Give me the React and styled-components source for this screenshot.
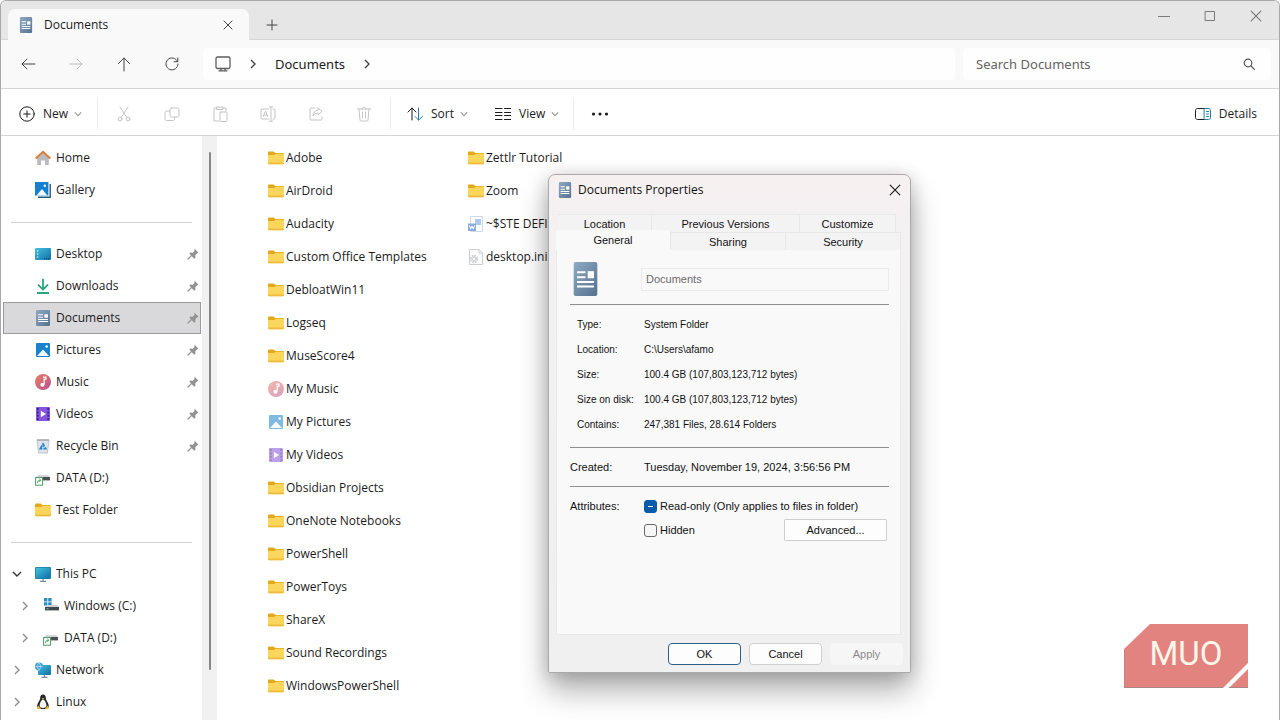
import { useEffect, useRef } from "react";
import styled, { createGlobalStyle, css } from "styled-components";

const GlobalStyle = createGlobalStyle`
  * {
    box-sizing: border-box;
  }

  body {
    margin: 0;
    background: #fff;
    color: #1b1b1b;
    font-family: "Open Sans", "Noto Sans", sans-serif;
    font-size: 12px;
    line-height: 16px;
  }

  button,
  input {
    font: inherit;
    color: inherit;
    padding: 0;
    margin: 0;
    border: none;
    background: none;
    outline: none;
  }

  a {
    color: inherit;
    text-decoration: none;
  }

  svg {
    display: block;
    flex: none;
  }
`;

const Window = styled.div`
  position: relative;
  display: flex;
  flex-direction: column;
  min-height: 100vh;
  overflow: hidden;
  border: 1px solid #a8a8a8;
  border-bottom: none;
  border-radius: 6px 6px 0 0;
  background: #fff;
`;

const TitleBar = styled.header`
  display: flex;
  height: 39px;
  padding-left: 7px;
  background: #e6e6e6;
  box-shadow: inset 0 -1px #d6d6d6;
`;

const Tab = styled.div`
  display: flex;
  align-items: center;
  width: 241px;
  margin-top: 8px;
  padding: 0 13px 0 11px;
  gap: 11px;
  border-radius: 7px 7px 0 0;
  background: #f9f9fa;
  font-weight: 500;

  span {
    flex: 1;
  }
`;

const GlyphButton = styled.button`
  display: flex;
  align-items: center;
  justify-content: center;
  width: ${(props) => props.$width || 48}px;
  height: ${(props) => props.$height || 32}px;
  color: ${(props) => props.$color || "#444"};
`;

const NewTab = styled(GlyphButton)`
  margin: 8px auto 0 0;
`;

const AddressBar = styled.div`
  display: flex;
  align-items: center;
  height: 49px;
  padding: 0 8px 0 3px;
  border-bottom: 1px solid #d4d4d4;
  background: #f9f9f9;
`;

const Breadcrumb = styled.nav`
  display: flex;
  align-items: center;
  flex: 1;
  height: 32px;
  margin-left: 7px;
  padding-left: 12px;
  border-radius: 4px;
  background: #fefefe;
  font-family: "Noto Sans", sans-serif;
  font-size: 13px;

  a {
    margin: 0 17px;
  }

  svg:first-child {
    margin-right: 17px;
    color: #5c5c5c;
  }
`;

const SearchBox = styled.label`
  display: flex;
  align-items: center;
  width: 308px;
  height: 32px;
  margin-left: 8px;
  padding: 0 16px 0 13px;
  border-radius: 4px;
  background: #fefefe;
  color: #555;
  font-family: "Noto Sans", sans-serif;
  font-size: 13px;

  input {
    flex: 1;
    min-width: 0;
  }

  input::placeholder {
    color: #636363;
    opacity: 1;
  }
`;

const Toolbar = styled.div`
  display: flex;
  align-items: center;
  height: 47px;
  padding: 3px 22px 0 18px;
  border-bottom: 1px solid #d4d4d4;
  background: #fff;
`;

const ToolButton = styled.button`
  display: flex;
  align-items: center;
  gap: 8px;
  width: ${(props) => (props.$width ? `${props.$width}px` : "auto")};
  height: 32px;
  margin-left: ${(props) => (props.$push ? "auto" : "0")};

  svg:last-child:not(:first-child) {
    margin-left: -2px;
  }
`;

const ToolDivider = styled.span`
  width: 1px;
  height: 32px;
  margin: 0 ${(props) => props.$after || 2}px 0 ${(props) => props.$before || 2}px;
  background: #ececec;
`;

const Body = styled.div`
  display: flex;
  flex: 1;
`;

const Sidebar = styled.nav`
  width: 200px;
  padding: 6px 0 2px 2px;
`;

const NavRow = styled.a`
  display: flex;
  align-items: center;
  height: 32px;
  gap: 5px;
  padding: 0 1px 0 ${(props) => (props.$nested ? 15 : 7)}px;
  border: 1px solid transparent;

  > span {
    flex: 1;
  }

  ${(props) =>
    props.$selected &&
    css`
      border-color: #9b9b9b;
      background: #d9d9db;
    `}
`;

const Expander = styled.i`
  display: flex;
  justify-content: center;
  width: 12px;
  margin-right: 7px;
`;

const NavDivider = styled.hr`
  height: 32px;
  margin: 0 9px 0 8px;
  border: none;
  background: linear-gradient(#d0d0d0, #d0d0d0) center / 100% 1px no-repeat;
`;

const ScrollTrack = styled.div`
  display: flex;
  justify-content: center;
  width: 15px;
  margin-left: 1px;
  padding: 16px 0 50px;
  background: #f1f1f2;
`;

const ScrollThumb = styled.div`
  width: 2px;
  border-radius: 1px;
  background: #88888a;
`;

const FileList = styled.main`
  display: grid;
  grid-auto-flow: column;
  grid-template-rows: repeat(17, 33px);
  grid-auto-columns: 200px;
  flex: 1;
  min-width: 0;
  padding: 5px 0 0 51px;
`;

const FileItem = styled.a`
  display: flex;
  align-items: center;
  gap: 2px;
  white-space: nowrap;

  svg {
    opacity: ${(props) => (props.$faded ? 0.55 : 1)};
  }
`;

const Dialog = styled.section`
  position: absolute;
  top: 173px;
  left: 547px;
  display: flex;
  flex-direction: column;
  width: 363px;
  height: 499px;
  border: 1px solid #a9a9a9;
  border-radius: 7px 7px 1px 1px;
  background: linear-gradient(#f7f0f1, #f3f1f2 60px, #f0f0f0);
  box-shadow:
    0 18px 30px rgba(0, 0, 0, 0.3),
    0 2px 18px rgba(0, 0, 0, 0.18);
  color: #111;
  font-family: "Liberation Sans", Arial, sans-serif;
  font-size: 11px;
  line-height: 14px;
`;

const DialogTitle = styled.header`
  display: flex;
  align-items: center;
  gap: 6px;
  height: 30px;
  padding: 0 9px;
  font-family: "Open Sans", "Noto Sans", sans-serif;
  font-size: 12px;

  h2 {
    flex: 1;
    margin: 0;
    font-size: inherit;
    font-weight: 400;
  }
`;

const TabRow = styled.div`
  display: grid;
  grid-template-columns: ${(props) => props.$columns};
  margin: ${(props) => props.$margin};
`;

const DialogTab = styled.button`
  height: 18px;
  border: solid #e8e8e8;
  border-width: 1px 1px 0 0;
  background: #f4f3f4;

  ${(props) =>
    props.$selected &&
    css`
      height: 20px;
      margin-top: -2px;
      padding-bottom: 2px;
      border-top-color: #f9f9fa;
      background: #f9f9fa;
    `}
`;

const Panel = styled.div`
  flex: 1;
  margin: 0 9px 0 7px;
  padding: 12px 11px 0 13px;
  border: 1px solid #e9e9e9;
  border-top: none;
  background: #f9f9f9;
`;

const NameRow = styled.div`
  display: flex;
  align-items: center;
  justify-content: space-between;
  height: 42px;
  padding: 0 0 8px 2px;

  input {
    width: 248px;
    height: 23px;
    padding-left: 4px;
    border: 1px solid #ebebeb;
    color: #6b6b6b;
  }
`;

const Rule = styled.hr`
  height: 1px;
  margin: 0;
  border: none;
  background: #8f8f8f;
`;

const Facts = styled.dl`
  display: grid;
  grid-template-columns: ${(props) => (props.$inset ? 67 : 74)}px 1fr;
  grid-auto-rows: 25px;
  align-items: center;
  margin: 0;
  padding: ${(props) => (props.$inset ? "7px 0 10px 7px" : "6px 0 7px")};
  font-size: ${(props) => (props.$inset ? 10 : 11)}px;

  dd {
    margin: 0;
  }
`;

const Attributes = styled.fieldset`
  display: grid;
  grid-template-columns: 74px auto 1fr;
  grid-auto-rows: 24px;
  align-items: center;
  margin: 0;
  padding: 7px 2px 0 0;
  border: none;
`;

const CheckLabel = styled.label`
  display: flex;
  align-items: center;
  gap: 3px;
  grid-column: ${(props) => props.$span};
`;

const CheckBox = styled.input`
  width: 13px;
  height: 13px;
  border: 1px solid #6a6a6a;
  border-radius: 3px;
  appearance: none;
  background: #f6f6f6;

  &:indeterminate {
    border-color: #0a5bab;
    background: linear-gradient(#fff, #fff) center / 5px 1px no-repeat #0a5bab;
  }
`;

const PushButton = styled.button`
  width: ${(props) => (props.$wide ? 103 : 73)}px;
  height: 22px;
  border: 1px solid ${(props) => (props.$primary ? "#2b5f8c" : "#cfcfcf")};
  border-radius: ${(props) => (props.$wide ? 1 : 4)}px;
  background: #fdfdfd;
  justify-self: end;

  &:disabled {
    border-color: #f6f6f6;
    background: #f6f6f6;
    color: #8b8b8b;
  }
`;

const DialogFooter = styled.footer`
  display: flex;
  justify-content: flex-end;
  gap: 8px;
  padding: 8px 7px 7px;
`;

const Watermark = styled.div`
  position: absolute;
  right: 31px;
  bottom: 32px;
  display: grid;
  place-items: center;
  width: 124px;
  height: 64px;
  color: #fff6ea;
  font-family: Roboto, sans-serif;
  font-size: 33px;
  font-weight: 400;
  line-height: 60px;

  svg,
  span {
    grid-area: 1 / 1;
  }

  span {
    align-self: start;
  }
`;

function Line({ size = 16, box = 16, width = 1, children }) {
  return (
    <svg
      width={size}
      height={size}
      viewBox={`0 0 ${box} ${box}`}
      fill="none"
      stroke="currentColor"
      strokeWidth={width}
      strokeLinecap="round"
      strokeLinejoin="round"
    >
      {children}
    </svg>
  );
}

const Chevron = ({ dir = "right", color = "#444", size = 10 }) => (
  <svg width={size} height={size} viewBox="0 0 10 10" fill="none" stroke={color} strokeWidth="1.4">
    <path d={dir === "down" ? "M1 3l4 4 4-4" : "M3 1l4 4-4 4"} />
  </svg>
);

const CloseGlyph = ({ size = 11 }) => (
  <Line size={size} box={10}>
    <path d="M1 1l8 8M9 1L1 9" />
  </Line>
);

const DocumentIcon = ({ width = 16, height = 16, id }) => (
  <svg width={width} height={height} viewBox="0 0 16 20" preserveAspectRatio="none">
    <defs>
      <linearGradient id={id} x1="0" y1="0" x2="1" y2="1">
        <stop offset="0" stopColor="#8fabc2" />
        <stop offset="1" stopColor="#56718f" />
      </linearGradient>
    </defs>
    <rect x="1" y="0" width="14" height="20" rx="1.2" fill={`url(#${id})`} />
    <path d="M3 6h5M3 9h5M3 11.8h10M3 14.4h10" stroke="#fff" strokeWidth="1.2" />
    <rect x="9.3" y="5.4" width="3.7" height="4.2" fill="#fff" />
  </svg>
);

const FolderIcon = () => (
  <svg width="16" height="16" viewBox="0 0 16 16">
    <path d="M0 2.6C0 2 .5 1.5 1 1.5h4.6L7.4 3H15c.6 0 1 .4 1 1v3H0z" fill="#e3a91b" />
    <path d="M0 5h6.2l1.6-1.3H15c.6 0 1 .4 1 1V13c0 .7-.4 1.2-1 1.2H1c-.6 0-1-.5-1-1.2z" fill="#fbd65c" />
    <path d="M0 12.6h16v.4c0 .7-.4 1.2-1 1.2H1c-.6 0-1-.5-1-1.2z" fill="#eebb3c" />
  </svg>
);

const PictureIcon = () => (
  <svg width="16" height="16" viewBox="0 0 16 16">
    <rect x="1" y="1" width="14" height="14" rx="1" fill="#1683cc" />
    <path d="M2 14l6-6.5 6 6.5z" fill="#f2faff" />
    <circle cx="11.7" cy="4.5" r="1.3" fill="#fff" />
  </svg>
);

const MusicIcon = () => (
  <svg width="16" height="16" viewBox="0 0 16 16">
    <defs>
      <linearGradient id="music" x1="0" y1="0" x2="1" y2="1">
        <stop offset="0" stopColor="#e88062" />
        <stop offset="1" stopColor="#b9508c" />
      </linearGradient>
    </defs>
    <circle cx="8" cy="8" r="8" fill="url(#music)" />
    <path d="M8 3.2h3v1.9H9.2v5.4" fill="none" stroke="#fff" strokeWidth="1.2" />
    <circle cx="7.4" cy="10.8" r="2" fill="#fff" />
  </svg>
);

const VideoIcon = () => (
  <svg width="16" height="16" viewBox="0 0 16 16">
    <rect x="1" y="1" width="14" height="14" rx="1" fill="#8653dc" />
    <path d="M2.8 2v12M13.2 2v12" stroke="#3f2388" strokeWidth="1.8" strokeDasharray="2 1.4" />
    <path d="M5.8 4.8v6.4L11 8z" fill="#fff" />
  </svg>
);

const DriveIcon = () => (
  <svg width="16" height="16" viewBox="0 0 16 16">
    <path d="M3 5h10l2 2H1z" fill="#d5d7da" />
    <rect x="1" y="7" width="14" height="3.4" fill="#4b5054" />
    <rect x=".6" y="7.6" width="7" height="7.6" fill="#fff" stroke="#4d9b63" />
    <path d="M2.5 13c0-2 1-2.6 3-2.6M4.3 9l1.6 1.4-1.6 1.4" fill="none" stroke="#38a457" />
  </svg>
);

const NAV_ICONS = {
  home: (
    <svg width="16" height="16" viewBox="0 0 16 16">
      <path d="M2.2 7.5L8 2.3l5.8 5.2V15H10v-4.4H6V15H2.2z" fill="#b9bbc0" />
      <path d="M.7 8.6L8 1.8l7.3 6.8" fill="none" stroke="#dc7f35" strokeWidth="2" />
    </svg>
  ),
  gallery: (
    <svg width="16" height="16" viewBox="0 0 16 16">
      <path d="M3 15.2h12.2V2" fill="none" stroke="#23587f" strokeWidth="1.4" />
      <rect width="13.4" height="13.6" fill="#1580ce" />
      <path d="M1.4 13.6L7 7l5.4 6.6z" fill="#f1f9ff" />
      <circle cx="9.8" cy="3.8" r="1.2" fill="#fff" />
    </svg>
  ),
  desktop: (
    <svg width="16" height="16" viewBox="0 0 16 16">
      <defs>
        <linearGradient id="screen" x1="0" y1="0" x2="1" y2="1">
          <stop offset="0" stopColor="#45c3dc" />
          <stop offset="1" stopColor="#0f6ea8" />
        </linearGradient>
      </defs>
      <rect y="2" width="16" height="12" rx="1" fill="url(#screen)" />
      <path d="M2 5h1.4M2 8h1.4M2 11h1.4" stroke="#fff" strokeWidth="1.2" />
      <path d="M9 12.5h6" stroke="#0b4b78" strokeDasharray="1 1" />
    </svg>
  ),
  downloads: (
    <svg width="16" height="16" viewBox="0 0 16 16" fill="none" stroke="#27a57f" strokeWidth="1.8">
      <path d="M8 .8v10.4M3 6.6l5 5 5-5M2 15h12" />
    </svg>
  ),
  documents: <DocumentIcon id="doc-nav" />,
  pictures: <PictureIcon />,
  music: <MusicIcon />,
  videos: <VideoIcon />,
  recycle: (
    <svg width="16" height="16" viewBox="0 0 16 16">
      <path d="M2 2h12l-1.6 13H3.6z" fill="#dfe4e8" stroke="#b3babf" strokeWidth=".8" />
      <path d="M2 2h12" stroke="#99a1a7" strokeWidth="1.2" />
      <path
        d="M5.4 10.6L8 6l2.6 4.6z"
        fill="none"
        stroke="#2486c7"
        strokeWidth="1.8"
        strokeDasharray="3.6 1"
      />
    </svg>
  ),
  drive: <DriveIcon />,
  folder: <FolderIcon />,
  pc: (
    <svg width="16" height="16" viewBox="0 0 16 16">
      <rect y="1" width="16" height="12" rx="1" fill="#1f7eaa" />
      <rect x=".8" y="1.8" width="14.4" height="10.4" fill="url(#screen)" />
      <path d="M8 13v2M5 15.3h6" stroke="#7d8b94" strokeWidth="1.2" />
    </svg>
  ),
  windows: (
    <svg width="16" height="16" viewBox="0 0 16 16">
      <path d="M1 0h3.4v3.4H1zM5.2 0h3.4v3.4H5.2zM1 4.2h3.4v3.4H1zM5.2 4.2h3.4v3.4H5.2z" fill="#2a8dc0" />
      <path d="M4 7h10l2 2H2z" fill="#cfd2d5" />
      <rect x="2" y="9" width="14" height="3.4" fill="#41474c" />
      <path d="M3.5 10.7h2" stroke="#63d3a5" />
    </svg>
  ),
  network: (
    <svg width="16" height="16" viewBox="0 0 16 16">
      <rect x="3" y="3" width="13" height="10" rx="1" fill="url(#screen)" />
      <path d="M9.5 13v2M6.5 15.3h6" stroke="#7d8b94" strokeWidth="1.2" />
      <circle cx="4" cy="4.6" r="4" fill="#3c9bd2" />
      <path d="M.4 4.6h7.2M4 .8c-2 2.4-2 5 0 7.6M4 .8c2 2.4 2 5 0 7.6" fill="none" stroke="#c6e8f8" strokeWidth=".8" />
    </svg>
  ),
  linux: (
    <svg width="16" height="16" viewBox="0 0 16 16">
      <path d="M8 .5c2 0 2.8 1.5 2.8 3.5 0 2.6 3 4.5 3 8.2 0 1.6-1.6 2.8-5.8 2.8s-5.8-1.2-5.8-2.8c0-3.7 3-5.6 3-8.2C5.2 2 6 .5 8 .5z" fill="#26272a" />
      <path d="M8 5.6c1.4 0 3.4 3.4 3.4 6.2 0 1.7-1.6 2.2-3.400 2.200s-3.400-.5-3.400-2.200C4.600 9 6.600 5.600 8 5.600z" fill="#f4f4f4" />
      <path d="M6.6 4.6L8 4l1.4.6L8 5.8zM1.6 14.6l1.8-3 2.8 3.6zM14.4 14.6l-1.8-3-2.8 3.6z" fill="#e6b62c" />
    </svg>
  ),
};

const FILE_ICONS = {
  folder: <FolderIcon />,
  music: <MusicIcon />,
  pictures: <PictureIcon />,
  videos: <VideoIcon />,
  word: (
    <svg width="16" height="16" viewBox="0 0 16 16">
      <path d="M2.5.5h12v15h-12z" fill="#fff" stroke="#a9bbd2" />
      <rect x="7" y="3" width="6" height="6" fill="#6f9fe0" />
      <rect x="0" y="7.5" width="8" height="7.5" fill="#2f6cc0" />
      <path d="M1.5 9.5l1.2 3.5L4 10l1.3 3 1.2-3.5" fill="none" stroke="#fff" />
    </svg>
  ),
  ini: (
    <svg width="16" height="16" viewBox="0 0 16 16" fill="none" stroke="#a4a8ac">
      <path d="M1.5.5H11L14.5 4v11.5h-13zM11 .5V4h3.500" fill="#fbfbfb" />
      <circle cx="6" cy="10" r="3.2" strokeWidth="2" strokeDasharray="1.6 .9" />
      <circle cx="6" cy="10" r="1.8" />
    </svg>
  ),
};

const PinIcon = () => (
  <svg width="12" height="12" viewBox="0 0 12 12">
    <path d="M7.3.5l4.2 4.2-1.3.6-1.9 1.9.1 2.5-1.2 1L2.4 5.8l1-1.2 2.500.1 1.700-1.900z" fill="#929292" />
    <path d="M4.6 7.4L.6 11.4" stroke="#929292" strokeWidth="1.3" />
  </svg>
);

const SIDEBAR = [
  { label: "Home", icon: "home" },
  { label: "Gallery", icon: "gallery" },
  { divider: true },
  { label: "Desktop", icon: "desktop", pinned: true },
  { label: "Downloads", icon: "downloads", pinned: true },
  { label: "Documents", icon: "documents", pinned: true, selected: true },
  { label: "Pictures", icon: "pictures", pinned: true },
  { label: "Music", icon: "music", pinned: true },
  { label: "Videos", icon: "videos", pinned: true },
  { label: "Recycle Bin", icon: "recycle", pinned: true },
  { label: "DATA (D:)", icon: "drive" },
  { label: "Test Folder", icon: "folder" },
  { divider: true },
  { label: "This PC", icon: "pc", expander: "down" },
  { label: "Windows (C:)", icon: "windows", expander: "right", nested: true },
  { label: "DATA (D:)", icon: "drive", expander: "right", nested: true },
  { label: "Network", icon: "network", expander: "right" },
  { label: "Linux", icon: "linux", expander: "right" },
];

const FILES = [
  { name: "Adobe" },
  { name: "AirDroid" },
  { name: "Audacity" },
  { name: "Custom Office Templates" },
  { name: "DebloatWin11" },
  { name: "Logseq" },
  { name: "MuseScore4" },
  { name: "My Music", icon: "music", faded: true },
  { name: "My Pictures", icon: "pictures", faded: true },
  { name: "My Videos", icon: "videos", faded: true },
  { name: "Obsidian Projects" },
  { name: "OneNote Notebooks" },
  { name: "PowerShell" },
  { name: "PowerToys" },
  { name: "ShareX" },
  { name: "Sound Recordings" },
  { name: "WindowsPowerShell" },
  { name: "Zettlr Tutorial" },
  { name: "Zoom" },
  { name: "~$STE DEFIN", icon: "word", faded: true },
  { name: "desktop.ini", icon: "ini", faded: true },
];

const FACTS = [
  ["Type:", "System Folder"],
  ["Location:", "C:\\Users\\afamo"],
  ["Size:", "100.4 GB (107,803,123,712 bytes)"],
  ["Size on disk:", "100.4 GB (107,803,123,712 bytes)"],
  ["Contains:", "247,381 Files, 28.614 Folders"],
];

const EDIT_ACTIONS = [
  {
    label: "Cut",
    glyph: (
      <>
        <path d="M4 1l6.500 10M12 1L5.500 11" />
        <circle cx="4" cy="13" r="2" />
        <circle cx="12" cy="13" r="2" />
      </>
    ),
  },
  {
    label: "Copy",
    glyph: (
      <>
        <rect x="6" y="2" width="9" height="9" rx="1.5" />
        <path d="M6 5H2.500C1.700 5 1 5.700 1 6.500V13c0 .8.7 1.500 1.500 1.500H9c.8 0 1.500-.7 1.500-1.500v-2" />
      </>
    ),
  },
  {
    label: "Paste",
    glyph: (
      <>
        <path d="M5 2H2v13h5M11 2h3v3M5 1h6v2.500H5z" />
        <rect x="8" y="6" width="7" height="9.5" rx="1" />
      </>
    ),
  },
  {
    label: "Rename",
    glyph: (
      <>
        <path d="M9 3H2C1.400 3 1 3.400 1 4v8c0 .6.4 1 1 1h7M13 3h1c.6 0 1 .4 1 1v8c0 .6-.4 1-1 1h-1M11 .8v14.400M9.500.8h3M9.500 15.200h3" />
        <path d="M3.300 10.500L5.500 5l2.200 5.500M4 9h3" />
      </>
    ),
  },
  {
    label: "Share",
    glyph: (
      <>
        <path d="M7 2H3C2.400 2 2 2.400 2 3v10c0 .6.4 1 1 1h10c.6 0 1-.4 1-1v-2" />
        <path d="M10 2l4 3.500-4 3.500V7C7.500 7 6 8 5 10c0-3.500 2-5.500 5-6z" />
      </>
    ),
  },
  {
    label: "Delete",
    glyph: <path d="M1.500 3h13M6 3c0-2.500 4-2.500 4 0M3 3l1 11c0 .6.5 1 1 1h6c.5 0 1-.4 1-1l1-11M6.500 6v6M9.500 6v6" />,
  },
];

function ExplorerHeader() {
  return (
    <>
      <TitleBar>
        <Tab>
          <DocumentIcon width={14} id="doc-tab" />
          <span>Documents</span>
          <GlyphButton $width={16} $height={16} aria-label="Close tab">
            <CloseGlyph size={10} />
          </GlyphButton>
        </Tab>
        <NewTab $width={46} aria-label="New tab">
          <Line size={12} box={12}>
            <path d="M6 1v10M1 6h10" />
          </Line>
        </NewTab>
        <GlyphButton $width={46} $height={30} $color="#7b7b7b" aria-label="Minimize">
          <Line size={12} box={12}>
            <path d="M0 6.500h12" />
          </Line>
        </GlyphButton>
        <GlyphButton $width={46} $height={30} $color="#7b7b7b" aria-label="Maximize">
          <Line size={12} box={12}>
            <path d="M1.500 1.500h9v9h-9z" />
          </Line>
        </GlyphButton>
        <GlyphButton $width={46} $height={30} $color="#7b7b7b" aria-label="Close">
          <CloseGlyph size={12} />
        </GlyphButton>
      </TitleBar>
      <AddressBar>
        <GlyphButton aria-label="Back">
          <Line>
            <path d="M15 8H2M7 3L2 8l5 5" />
          </Line>
        </GlyphButton>
        <GlyphButton $color="#bdbdbd" aria-label="Forward">
          <Line>
            <path d="M2 8h12M9 3l5 5-5 5" />
          </Line>
        </GlyphButton>
        <GlyphButton aria-label="Up">
          <Line>
            <path d="M8 15V2M2.500 7.500L8 2l5.500 5.500" />
          </Line>
        </GlyphButton>
        <GlyphButton aria-label="Refresh">
          <Line>
            <path d="M13.500 5.500A6 6 0 1 0 14 8M13.800 2v3.700h-3.700" />
          </Line>
        </GlyphButton>
        <Breadcrumb>
          <Line width={1.3}>
            <rect x="1" y="1" width="14" height="11.5" rx="1.5" />
            <path d="M6 12.500v2M10 12.500v2M4 14.800h8" />
          </Line>
          <Chevron />
          <a href="#documents">Documents</a>
          <Chevron />
        </Breadcrumb>
        <SearchBox>
          <input type="search" placeholder="Search Documents" aria-label="Search Documents" />
          <Line size={12} box={12} width={1.2}>
            <circle cx="5" cy="5" r="3.8" />
            <path d="M8 8l3.400 3.400" />
          </Line>
        </SearchBox>
      </AddressBar>
      <Toolbar>
        <ToolButton $width={64}>
          <Line>
            <circle cx="8" cy="8" r="7.2" />
            <path d="M8 4.800v6.400M4.800 8h6.400" />
          </Line>
          New
          <Chevron dir="down" size={8} color="#999" />
        </ToolButton>
        <ToolDivider $before={14} />
        {EDIT_ACTIONS.map(({ label, glyph }) => (
          <GlyphButton key={label} $color="#c4c4c4" aria-label={label}>
            <Line>{glyph}</Line>
          </GlyphButton>
        ))}
        <ToolDivider $after={16} />
        <ToolButton $width={88}>
          <Line>
            <path d="M5 14V2M1 6l4-4 4 4" />
            <path d="M11.500 2v12M8 10.500l3.500 3.500 4-3.500" stroke="#2a7fa8" />
          </Line>
          Sort
          <Chevron dir="down" size={8} color="#999" />
        </ToolButton>
        <ToolButton $width={64}>
          <Line>
            <path d="M0 2.500h7M0 6.500h7M0 9.500h7M0 13.500h7M9.500 2.500h6.500M9.500 6.500h6.500M9.500 9.500h6.500M9.500 13.500h6.500" />
          </Line>
          View
          <Chevron dir="down" size={8} color="#999" />
        </ToolButton>
        <ToolDivider $before={14} />
        <GlyphButton aria-label="See more">
          <svg width="18" height="4" viewBox="0 0 18 4" fill="#1b1b1b">
            <circle cx="2.5" cy="2" r="1.6" />
            <circle cx="9" cy="2" r="1.6" />
            <circle cx="15.5" cy="2" r="1.6" />
          </svg>
        </GlyphButton>
        <ToolButton $push>
          <Line>
            <path d="M10 2.500H2.500C1.500 2.500.5 3.300.5 4.300v7.400c0 1 1 1.800 2 1.800H10" />
            <path d="M9.500 2.500h4c1 0 2 .8 2 1.800v7.400c0 1-1 1.800-2 1.800h-4zM11.500 5.500h2M11.500 8h2M11.500 10.500h2" stroke="#1f7ea8" />
          </Line>
          Details
        </ToolButton>
      </Toolbar>
    </>
  );
}

function SidebarItem({ item }) {
  return (
    <NavRow href="#" $nested={item.nested} $selected={item.selected}>
      <Expander>
        {item.expander && (
          <Chevron dir={item.expander} color={item.expander === "down" ? "#333" : "#8d8d8d"} />
        )}
      </Expander>
      {NAV_ICONS[item.icon]}
      <span>{item.label}</span>
      {item.pinned && <PinIcon />}
    </NavRow>
  );
}

function FactPair({ term, value }) {
  return (
    <>
      <dt>{term}</dt>
      <dd>{value}</dd>
    </>
  );
}

function PropertiesDialog() {
  const readOnlyRef = useRef(null);

  useEffect(() => {
    readOnlyRef.current.indeterminate = true;
  }, []);

  return (
    <Dialog role="dialog" aria-label="Documents Properties">
      <DialogTitle>
        <DocumentIcon width={14} id="doc-title" />
        <h2>Documents Properties</h2>
        <GlyphButton $width={12} $height={16} $color="#222" aria-label="Close dialog">
          <CloseGlyph size={12} />
        </GlyphButton>
      </DialogTitle>
      <TabRow $columns="94px 1fr 96px" $margin="9px 14px 0 9px">
        <DialogTab>Location</DialogTab>
        <DialogTab>Previous Versions</DialogTab>
        <DialogTab>Customize</DialogTab>
      </TabRow>
      <TabRow $columns="repeat(3, 1fr)" $margin="0 9px 0 7px">
        <DialogTab $selected>General</DialogTab>
        <DialogTab>Sharing</DialogTab>
        <DialogTab>Security</DialogTab>
      </TabRow>
      <Panel>
        <NameRow>
          <DocumentIcon width={27} height={34} id="doc-large" />
          <input aria-label="Folder name" defaultValue="Documents" />
        </NameRow>
        <Rule />
        <Facts $inset>
          {FACTS.map(([term, value]) => (
            <FactPair key={term} term={term} value={value} />
          ))}
        </Facts>
        <Rule />
        <Facts>
          <FactPair term="Created:" value="Tuesday, November 19, 2024, 3:56:56 PM" />
        </Facts>
        <Rule />
        <Attributes>
          <span>Attributes:</span>
          <CheckLabel $span="2 / 4">
            <CheckBox type="checkbox" ref={readOnlyRef} />
            Read-only (Only applies to files in folder)
          </CheckLabel>
          <span />
          <CheckLabel>
            <CheckBox type="checkbox" />
            Hidden
          </CheckLabel>
          <PushButton $wide>Advanced...</PushButton>
        </Attributes>
      </Panel>
      <DialogFooter>
        <PushButton $primary>OK</PushButton>
        <PushButton>Cancel</PushButton>
        <PushButton disabled>Apply</PushButton>
      </DialogFooter>
    </Dialog>
  );
}

function App() {
  return (
    <>
      <GlobalStyle />
      <Window>
        <ExplorerHeader />
        <Body>
          <Sidebar>
            {SIDEBAR.map((item, index) =>
              item.divider ? <NavDivider key={index} /> : <SidebarItem key={index} item={item} />
            )}
          </Sidebar>
          <ScrollTrack>
            <ScrollThumb />
          </ScrollTrack>
          <FileList>
            {FILES.map(({ name, icon = "folder", faded }) => (
              <FileItem key={name} href="#" $faded={faded}>
                {FILE_ICONS[icon]}
                <span>{name}</span>
              </FileItem>
            ))}
          </FileList>
        </Body>
        <PropertiesDialog />
        <Watermark>
          <svg width="124" height="64" viewBox="0 0 124 64">
            <path d="M26 0h98v39L99 64H0V25z" fill="#e2837f" />
            <path d="M124 45v19h-19z" fill="#e2837f" />
            <path d="M0 63.500h99M105 63.500h19M0 25v38" stroke="#a98683" fill="none" />
          </svg>
          <span>MUO</span>
        </Watermark>
      </Window>
    </>
  );
}

export default App;
